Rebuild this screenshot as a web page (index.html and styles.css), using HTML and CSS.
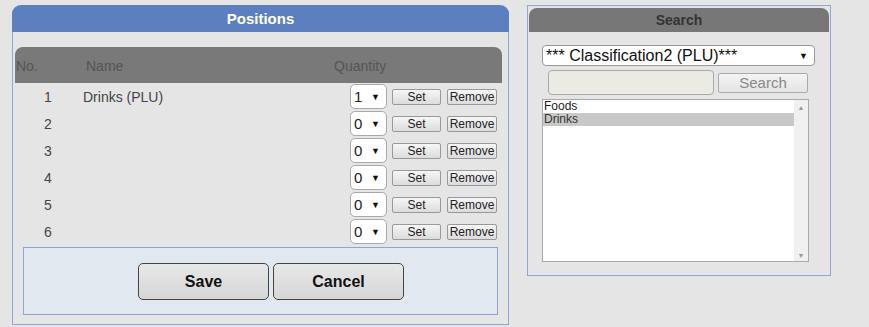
FILE: index.html
```html
<!DOCTYPE html>
<html lang="en">
<head>
  <meta charset="UTF-8">
  <title>Positions</title>
  <link rel="stylesheet" href="styles.css">
</head>
<body>
  <div class="page">
    <div class="panel positions">
      <div class="panel-head blue">Positions</div>
      <div class="panel-body">
        <div class="grid">
          <div class="grid-head">
            <span class="h-no">No.</span>
            <span class="h-name">Name</span>
            <span class="h-qty">Quantity</span>
          </div>

          <div class="row">
            <span class="no">1</span>
            <span class="name">Drinks (PLU)</span>
            <div class="qty"><span class="val">1</span><span class="arrow">▼</span></div>
            <button class="small set">Set</button>
            <button class="small remove">Remove</button>
          </div>
          <div class="row">
            <span class="no">2</span>
            <span class="name"></span>
            <div class="qty"><span class="val">0</span><span class="arrow">▼</span></div>
            <button class="small set">Set</button>
            <button class="small remove">Remove</button>
          </div>
          <div class="row">
            <span class="no">3</span>
            <span class="name"></span>
            <div class="qty"><span class="val">0</span><span class="arrow">▼</span></div>
            <button class="small set">Set</button>
            <button class="small remove">Remove</button>
          </div>
          <div class="row">
            <span class="no">4</span>
            <span class="name"></span>
            <div class="qty"><span class="val">0</span><span class="arrow">▼</span></div>
            <button class="small set">Set</button>
            <button class="small remove">Remove</button>
          </div>
          <div class="row">
            <span class="no">5</span>
            <span class="name"></span>
            <div class="qty"><span class="val">0</span><span class="arrow">▼</span></div>
            <button class="small set">Set</button>
            <button class="small remove">Remove</button>
          </div>
          <div class="row">
            <span class="no">6</span>
            <span class="name"></span>
            <div class="qty"><span class="val">0</span><span class="arrow">▼</span></div>
            <button class="small set">Set</button>
            <button class="small remove">Remove</button>
          </div>
        </div>

        <div class="actions">
          <button class="big">Save</button>
          <button class="big">Cancel</button>
        </div>
      </div>
    </div>

    <div class="panel search">
      <div class="panel-head gray">Search</div>
      <div class="search-body">
        <div class="classif"><span>*** Classification2 (PLU)***</span><span class="arrow">▼</span></div>
        <div class="search-line">
          <div class="search-input"></div>
          <button class="search-btn">Search</button>
        </div>
        <div class="listbox">
          <div class="items">
            <div class="item">Foods</div>
            <div class="item selected">Drinks</div>
          </div>
          <div class="scroll">
            <span>▲</span>
            <span>▼</span>
          </div>
        </div>
      </div>
    </div>
  </div>
</body>
</html>
```

FILE: styles.css
```css
* {
  box-sizing: border-box;
}

body {
  margin: 0;
  background: #e5e5e5;
  font-family: 'Liberation Sans', Arial, sans-serif;
  color: #444;
}

.page {
  display: flex;
  align-items: flex-start;
  gap: 18px;
  padding: 5px 0 0 12px;
}

button {
  font-family: 'Liberation Sans', Arial, sans-serif;
  cursor: pointer;
}

.panel {
  border: 1px solid #8fa6d4;
  border-top: none;
}

.positions {
  width: 497px;
  height: 320px;
  border-radius: 9px 9px 0 0;
}

.panel-head {
  font-weight: bold;
  text-align: center;
}

.panel-head.blue {
  height: 27px;
  line-height: 27px;
  margin: 0 -1px;
  background: #5b7fbf;
  color: #fff;
  font-size: 15px;
  border-radius: 9px 9px 0 0;
}

.panel-body {
  padding: 15px 6px 0 2px;
}

.grid-head {
  display: flex;
  align-items: center;
  height: 36px;
  background: #797979;
  border-radius: 8px 8px 0 0;
  color: #555;
  font-size: 14px;
  padding-top: 2px;
}

.h-no {
  width: 71px;
  padding-left: 1px;
}

.h-name {
  width: 248px;
}

.row {
  display: flex;
  align-items: center;
  height: 27px;
  padding-right: 5px;
  font-size: 14px;
  color: #444;
}

.row .no {
  width: 66px;
  text-align: center;
}

.row .name {
  flex: 1;
  padding-left: 2px;
}

.qty {
  display: flex;
  align-items: center;
  justify-content: space-between;
  width: 37px;
  height: 25px;
  padding: 0 6px 0 3px;
  background: #fff;
  border: 1px solid #aaa;
  border-radius: 5px;
  font-size: 15px;
  color: #222;
}

.arrow {
  font-size: 9px;
  color: #111;
}

.small {
  height: 16px;
  padding: 0;
  font-size: 12px;
  color: #222;
  background: linear-gradient(#f6f6f6, #dcdcdc);
  border: 1px solid #999;
  border-radius: 2px;
}

.set {
  width: 49px;
  margin-left: 5px;
}

.remove {
  width: 50px;
  margin-left: 6px;
}

.actions {
  display: flex;
  gap: 4px;
  height: 68px;
  margin: 2px 4px 0 8px;
  padding: 15px 0 0 114px;
  background: #e1e8f0;
  border: 1px solid #8fa6d4;
}

.big {
  width: 131px;
  height: 37px;
  font-size: 16px;
  font-weight: bold;
  color: #111;
  background: linear-gradient(#e8e8e8, #d6d6d6);
  border: 1px solid #444;
  border-radius: 5px;
}

.search {
  width: 304px;
  height: 271px;
  border-top: 1px solid #8fa6d4;
  padding: 2px 1px 0;
}

.panel-head.gray {
  height: 24px;
  line-height: 24px;
  background: #777;
  color: #333;
  font-size: 14px;
  border-radius: 8px 8px 0 0;
}

.search-body {
  padding: 13px 0 0 13px;
}

.classif {
  display: flex;
  align-items: center;
  justify-content: space-between;
  width: 273px;
  height: 21px;
  padding: 0 6px 0 3px;
  background: #fff;
  border: 1px solid #999;
  border-radius: 4px;
  font-size: 16px;
  color: #111;
}

.search-line {
  display: flex;
  align-items: center;
  gap: 4px;
  margin: 4px 0 4px 6px;
}

.search-input {
  width: 166px;
  height: 25px;
  background: #ebebe4;
  border: 1px solid #aaa;
  border-radius: 4px;
}

.search-btn {
  width: 90px;
  height: 20px;
  padding: 0;
  font-size: 15px;
  color: #888;
  background: linear-gradient(#f4f4f4, #e4e4e4);
  border: 1px solid #aaa;
  border-radius: 2px;
}

.listbox {
  display: flex;
  width: 267px;
  height: 163px;
  background: #fff;
  border: 1px solid #aaa;
}

.items {
  flex: 1;
  font-size: 12px;
  color: #222;
}

.item {
  height: 13px;
  line-height: 13px;
  padding-left: 1px;
}

.item.selected {
  background: #c8c8c8;
  color: #333;
}

.scroll {
  display: flex;
  flex-direction: column;
  justify-content: space-between;
  width: 14px;
  padding: 4px 0 2px;
  background: #f0f0f0;
  font-size: 7px;
  color: #999;
  text-align: center;
}
```
